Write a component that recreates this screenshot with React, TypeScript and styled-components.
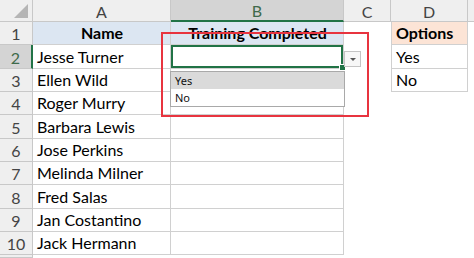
import React from "react";
import styled, { createGlobalStyle, css } from "styled-components";

const Global = createGlobalStyle`
  html, body { margin: 0; padding: 0; background: #fff; overflow: hidden; }
  #root { width: 474px; height: 258px; }
`;

const FONT = `"Lato", "Open Sans", "Noto Sans", sans-serif`;
const GRID = "#d0d0d0";
const HDR_LINE = "#c8c8c8";
const GREEN = "#217346";

const Sheet = styled.div`
  position: relative;
  width: 474px;
  height: 258px;
  display: grid;
  grid-template-columns: 33px 138px 173px 47px 77px 1fr;
  grid-template-rows: 22px repeat(10, 23.33px) 1fr;
  font-family: ${FONT};
  font-size: 16px;
  color: #000;
  overflow: hidden;
`;

const Corner = styled.div`
  background: #efefef;
  border-right: 1px solid ${HDR_LINE};
  border-bottom: 1px solid ${HDR_LINE};
  box-sizing: border-box;
  display: flex;
  align-items: flex-end;
  justify-content: flex-end;
  padding: 0 4px 3px 0;
`;

const Triangle = styled.div`
  width: 0;
  height: 0;
  border-left: 14px solid transparent;
  border-bottom: 14px solid #b5b5b5;
`;

const ColHead = styled.div<{ $active?: boolean }>`
  box-sizing: border-box;
  background: ${(p) => (p.$active ? "#d4d4d4" : "#efefef")};
  color: ${(p) => (p.$active ? "#3f6a4b" : "#444")};
  border-right: 1px solid ${HDR_LINE};
  border-bottom: ${(p) => (p.$active ? `2px solid ${GREEN}` : `1px solid ${HDR_LINE}`)};
  display: flex;
  align-items: center;
  justify-content: center;
  font-size: 16px;
  padding-top: 1px;
`;

const RowHead = styled.div<{ $active?: boolean }>`
  box-sizing: border-box;
  background: ${(p) => (p.$active ? "#d4d4d4" : "#efefef")};
  color: ${(p) => (p.$active ? "#3f6a4b" : "#444")};
  border-right: ${(p) => (p.$active ? `2px solid ${GREEN}` : `1px solid ${HDR_LINE}`)};
  border-bottom: 1px solid ${HDR_LINE};
  display: flex;
  align-items: flex-end;
  justify-content: center;
  padding-bottom: 1px;
  font-size: 16px;
`;

type Fill = "none" | "blue" | "peach";

const fills: Record<Fill, string> = {
  none: "#ffffff",
  blue: "#dce6f2",
  peach: "#fce4d6",
};

const Cell = styled.div<{
  $fill?: Fill;
  $bold?: boolean;
  $center?: boolean;
  $grid?: boolean;
  $boxLeft?: boolean;
}>`
  position: relative;
  box-sizing: border-box;
  background: ${(p) => fills[p.$fill ?? "none"]};
  font-weight: ${(p) => (p.$bold ? 700 : 400)};
  display: flex;
  align-items: flex-end;
  justify-content: ${(p) => (p.$center ? "center" : "flex-start")};
  padding: 0 3px 1px 4px;
  white-space: nowrap;
  line-height: 20px;
  ${(p) =>
    p.$grid &&
    css`
      border-right: 1px solid ${GRID};
      border-bottom: 1px solid ${GRID};
    `}
  ${(p) =>
    p.$boxLeft &&
    css`
      border-left: 1px solid ${GRID};
    `}
`;

const SelectedCell = styled(Cell)`
  box-shadow: inset 0 0 0 2px ${GREEN};
  border-right: 1px solid ${GRID};
  border-bottom: 1px solid ${GRID};
`;

const FillHandle = styled.div`
  position: absolute;
  right: -3px;
  bottom: -3px;
  width: 5px;
  height: 5px;
  background: ${GREEN};
  border: 1px solid #fff;
  z-index: 3;
`;

const ArrowButton = styled.div`
  position: absolute;
  left: 173px;
  top: 6px;
  width: 17px;
  height: 16px;
  box-sizing: border-box;
  background: #f7f7f7;
  border: 1px solid #c4c4c4;
  display: flex;
  align-items: center;
  justify-content: center;
  z-index: 3;
`;

const ArrowGlyph = styled.div`
  width: 0;
  height: 0;
  border-left: 3px solid transparent;
  border-right: 3px solid transparent;
  border-top: 3px solid #555;
  margin-top: 1px;
`;

const ListBox = styled.div`
  position: absolute;
  left: -1px;
  top: 26px;
  width: 175px;
  height: 36px;
  box-sizing: border-box;
  background: #fff;
  border: 1px solid #a9a9a9;
  z-index: 3;
  font-family: "Noto Sans", "Open Sans", sans-serif;
  font-size: 11px;
  display: flex;
  flex-direction: column;
`;

const ListItem = styled.div<{ $hot?: boolean }>`
  height: 17px;
  display: flex;
  align-items: center;
  padding-left: 4px;
  background: ${(p) => (p.$hot ? "#dadada" : "transparent")};
  color: #111;
`;

const Highlight = styled.div`
  position: absolute;
  left: -10px;
  top: -13px;
  width: 208px;
  height: 85px;
  box-sizing: border-box;
  border: 2.5px solid #e8343f;
  z-index: 4;
  pointer-events: none;
`;

const names = [
  "Jesse Turner",
  "Ellen Wild",
  "Roger Murry",
  "Barbara Lewis",
  "Jose Perkins",
  "Melinda Milner",
  "Fred Salas",
  "Jan Costantino",
  "Jack Hermann",
];

const cols = ["A", "B", "C", "D", ""];

export default function App() {
  const rows: React.ReactNode[] = [];

  rows.push(
    <React.Fragment key="r1">
      <RowHead>1</RowHead>
      <Cell $fill="blue" $bold $center $grid>
        Name
      </Cell>
      <Cell $fill="blue" $bold $center $grid>
        Training Completed
      </Cell>
      <Cell />
      <Cell $fill="peach" $bold $grid $boxLeft>
        Options
      </Cell>
      <Cell />
    </React.Fragment>
  );

  names.forEach((name, i) => {
    const r = i + 2;
    const dVal = r === 2 ? "Yes" : r === 3 ? "No" : null;
    rows.push(
      <React.Fragment key={`r${r}`}>
        <RowHead $active={r === 2}>{r}</RowHead>
        <Cell $grid>{name}</Cell>
        {r === 2 ? (
          <SelectedCell>
            <FillHandle />
            <ArrowButton>
              <ArrowGlyph />
            </ArrowButton>
            <ListBox>
              <ListItem $hot>Yes</ListItem>
              <ListItem>No</ListItem>
            </ListBox>
            <Highlight />
          </SelectedCell>
        ) : (
          <Cell $grid />
        )}
        <Cell />
        {dVal ? (
          <Cell $grid $boxLeft>
            {dVal}
          </Cell>
        ) : (
          <Cell />
        )}
        <Cell />
      </React.Fragment>
    );
  });

  return (
    <>
      <Global />
      <Sheet>
        <Corner>
          <Triangle />
        </Corner>
        {cols.map((c, i) => (
          <ColHead key={i} $active={c === "B"}>
            {c}
          </ColHead>
        ))}
        {rows}
        <RowHead />
        <Cell />
        <Cell />
        <Cell />
        <Cell />
        <Cell />
      </Sheet>
    </>
  );
}
